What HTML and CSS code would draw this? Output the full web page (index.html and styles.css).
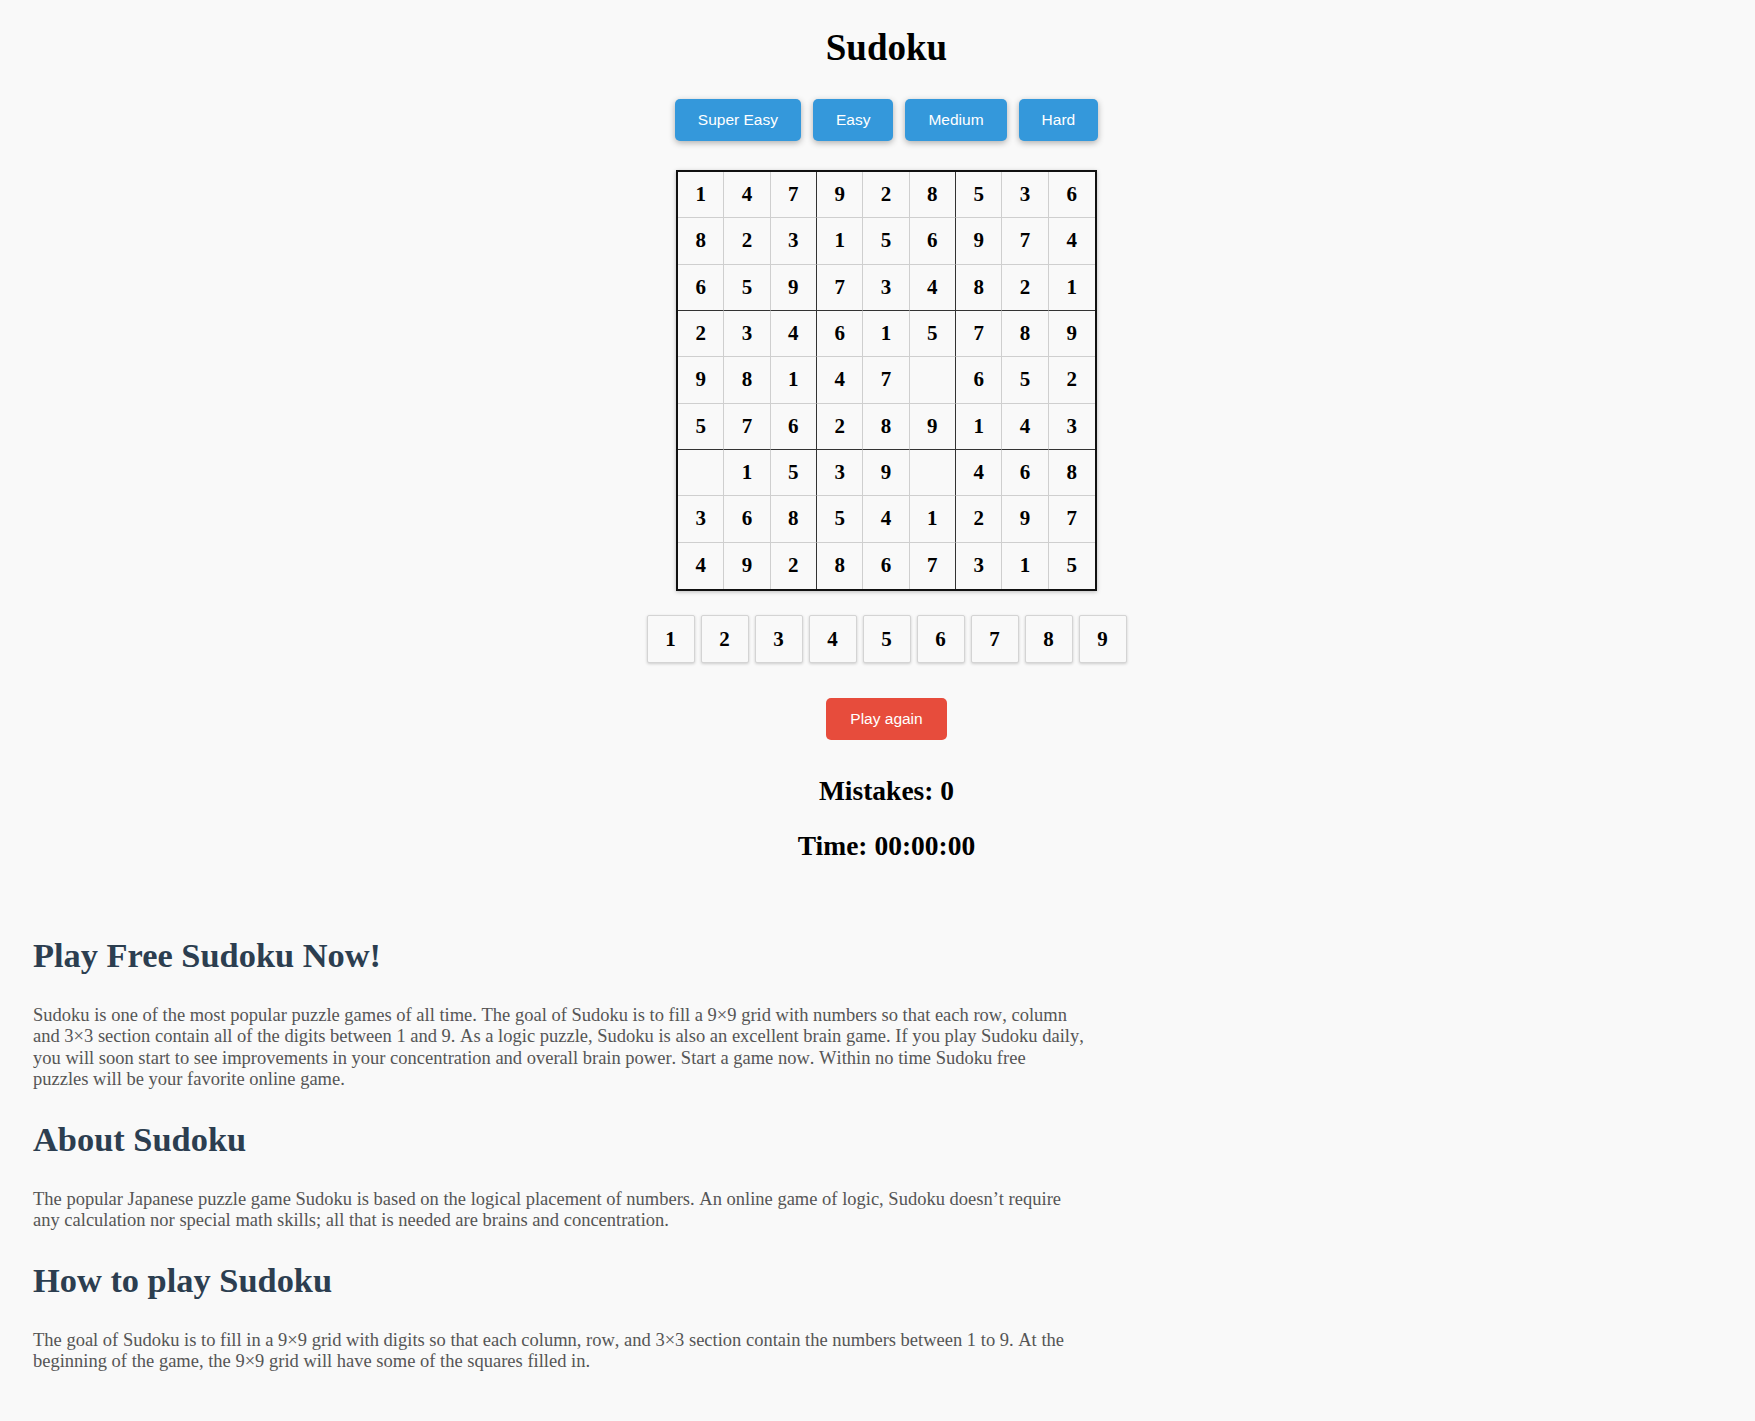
FILE: index.html
```html
<!DOCTYPE html>
<html lang="en">
<head>
<meta charset="utf-8">
<title>Sudoku</title>
<link rel="stylesheet" href="styles.css">
</head>
<body>
<main class="game">
  <h1 class="title">Sudoku</h1>
  <div class="levels">
    <button class="level">Super Easy</button>
    <button class="level">Easy</button>
    <button class="level">Medium</button>
    <button class="level">Hard</button>
  </div>
  <div class="board">
    <div class="cell">1</div><div class="cell">4</div><div class="cell">7</div><div class="cell">9</div><div class="cell">2</div><div class="cell">8</div><div class="cell">5</div><div class="cell">3</div><div class="cell">6</div>
    <div class="cell">8</div><div class="cell">2</div><div class="cell">3</div><div class="cell">1</div><div class="cell">5</div><div class="cell">6</div><div class="cell">9</div><div class="cell">7</div><div class="cell">4</div>
    <div class="cell">6</div><div class="cell">5</div><div class="cell">9</div><div class="cell">7</div><div class="cell">3</div><div class="cell">4</div><div class="cell">8</div><div class="cell">2</div><div class="cell">1</div>
    <div class="cell">2</div><div class="cell">3</div><div class="cell">4</div><div class="cell">6</div><div class="cell">1</div><div class="cell">5</div><div class="cell">7</div><div class="cell">8</div><div class="cell">9</div>
    <div class="cell">9</div><div class="cell">8</div><div class="cell">1</div><div class="cell">4</div><div class="cell">7</div><div class="cell"></div><div class="cell">6</div><div class="cell">5</div><div class="cell">2</div>
    <div class="cell">5</div><div class="cell">7</div><div class="cell">6</div><div class="cell">2</div><div class="cell">8</div><div class="cell">9</div><div class="cell">1</div><div class="cell">4</div><div class="cell">3</div>
    <div class="cell"></div><div class="cell">1</div><div class="cell">5</div><div class="cell">3</div><div class="cell">9</div><div class="cell"></div><div class="cell">4</div><div class="cell">6</div><div class="cell">8</div>
    <div class="cell">3</div><div class="cell">6</div><div class="cell">8</div><div class="cell">5</div><div class="cell">4</div><div class="cell">1</div><div class="cell">2</div><div class="cell">9</div><div class="cell">7</div>
    <div class="cell">4</div><div class="cell">9</div><div class="cell">2</div><div class="cell">8</div><div class="cell">6</div><div class="cell">7</div><div class="cell">3</div><div class="cell">1</div><div class="cell">5</div>
  </div>
  <div class="numpad">
    <button class="num">1</button><button class="num">2</button><button class="num">3</button><button class="num">4</button><button class="num">5</button><button class="num">6</button><button class="num">7</button><button class="num">8</button><button class="num">9</button>
  </div>
  <button class="again">Play again</button>
  <h2 class="stat">Mistakes: 0</h2>
  <h2 class="stat stat-time">Time: 00:00:00</h2>
</main>
<section class="info">
  <h2 class="info-title">Play Free Sudoku Now!</h2>
  <p class="info-text">Sudoku is one of the most popular puzzle games of all time. The goal of Sudoku is to fill a 9×9 grid with numbers so that each row, column and 3×3 section contain all of the digits between 1 and 9. As a logic puzzle, Sudoku is also an excellent brain game. If you play Sudoku daily, you will soon start to see improvements in your concentration and overall brain power. Start a game now. Within no time Sudoku free puzzles will be your favorite online game.</p>
  <h2 class="info-title">About Sudoku</h2>
  <p class="info-text">The popular Japanese puzzle game Sudoku is based on the logical placement of numbers. An online game of logic, Sudoku doesn’t require any calculation nor special math skills; all that is needed are brains and concentration.</p>
  <h2 class="info-title">How to play Sudoku</h2>
  <p class="info-text">The goal of Sudoku is to fill in a 9×9 grid with digits so that each column, row, and 3×3 section contain the numbers between 1 to 9. At the beginning of the game, the 9×9 grid will have some of the squares filled in.</p>
</section>
</body>
</html>
```
FILE: styles.css
```css
html, body {
  margin: 0;
  padding: 0;
  background: #f9f9f9;
}

body {
  font-family: "Liberation Serif", "Times New Roman", serif;
  color: #000;
}

.game {
  display: flex;
  flex-direction: column;
  align-items: center;
  padding-left: 18px;
  padding-bottom: 44.5px;
}

.title {
  margin: 26px 0 29px;
  font-size: 37px;
  line-height: 44px;
  font-weight: bold;
}

.levels {
  display: flex;
  gap: 12px;
}

.level,
.again {
  font-family: "Liberation Sans", Arial, sans-serif;
  font-size: 15.5px;
  line-height: 18px;
  padding: 12px 23px;
  color: #fff;
  border: none;
  border-radius: 5px;
}

.level {
  background: #3498db;
  box-shadow: 0 2px 6px rgba(0, 0, 0, 0.3);
}

.board {
  margin-top: 29px;
  width: 421px;
  height: 421px;
  box-sizing: border-box;
  border: 2px solid #111;
  display: grid;
  grid-template-columns: repeat(9, 1fr);
  grid-template-rows: repeat(9, 1fr);
  box-shadow: 0 1px 4px rgba(0, 0, 0, 0.25);
}

.cell {
  box-sizing: border-box;
  border-right: 1px solid #cfcfcf;
  border-bottom: 1px solid #cfcfcf;
  display: flex;
  align-items: center;
  justify-content: center;
  font-size: 21px;
  font-weight: bold;
}

.cell:nth-child(9n+3),
.cell:nth-child(9n+6) {
  border-right-color: #333;
}

.cell:nth-child(9n) {
  border-right: none;
}

.cell:nth-child(n+19):nth-child(-n+27),
.cell:nth-child(n+46):nth-child(-n+54) {
  border-bottom-color: #333;
}

.cell:nth-child(n+73) {
  border-bottom: none;
}

.numpad {
  margin-top: 24px;
  display: flex;
  gap: 6px;
}

.num {
  width: 48px;
  height: 48px;
  padding: 0;
  box-sizing: border-box;
  background: #f9f9f9;
  border: 1px solid #d4d4d4;
  border-radius: 2px;
  box-shadow: 0 1px 3px rgba(0, 0, 0, 0.18);
  font-family: "Liberation Serif", "Times New Roman", serif;
  font-size: 21px;
  font-weight: bold;
  color: #000;
}

.again {
  margin-top: 35px;
  background: #e74c3c;
  padding: 12px 24px;
}

.stat {
  margin: 35px 0 0;
  font-size: 27.5px;
  line-height: 32px;
  font-weight: bold;
}

.stat-time {
  margin-top: 23px;
}

.info {
  padding: 0 33px;
}

.info-title {
  margin: 28.5px 0 30px;
  font-size: 34.4px;
  line-height: 40px;
  font-weight: bold;
  color: #2c3e50;
}

.info-text {
  width: 1052px;
  margin: 0;
  font-size: 18.5px;
  line-height: 21.3px;
  color: #555;
  font-kerning: none;
}
```
